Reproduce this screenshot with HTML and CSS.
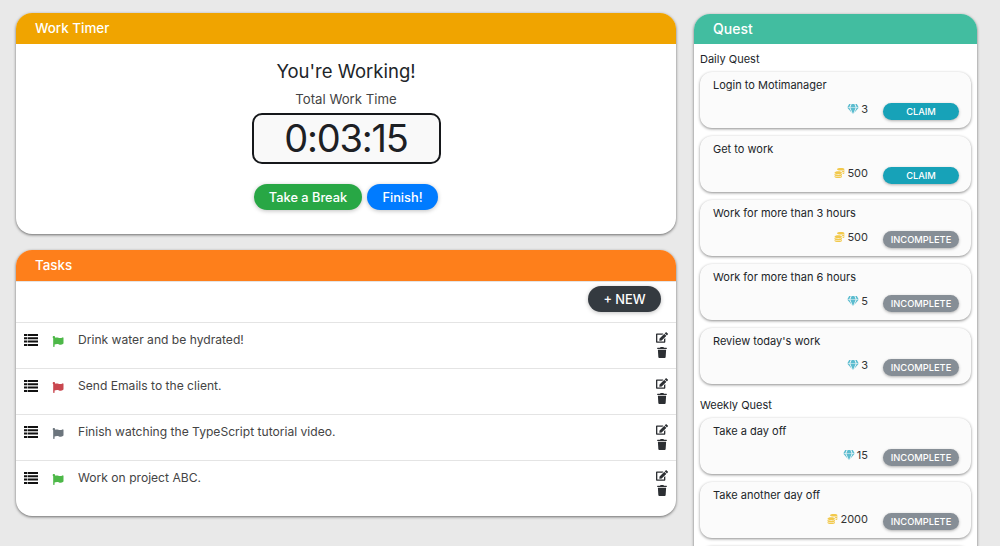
FILE: index.html
```html
<!DOCTYPE html>
<html lang="en">
<head>
  <meta charset="UTF-8">
  <title>Motimanager</title>
  <link rel="stylesheet" href="styles.css">
</head>
<body>
  <svg class="defs" width="0" height="0">
    <symbol id="i-list" viewBox="0 0 14 12"><path d="M0 0h3.400v2H0zM4 0h10v2H4zM0 3.300h3.400v2H0zM4 3.300h10v2H4zM0 6.600h3.400v2H0zM4 6.600h10v2H4zM0 9.900h3.400v2H0zM4 9.900h10v2H4z"/></symbol>
    <symbol id="i-flag" viewBox="0 0 512 512"><path d="M349.565 98.783C295.978 98.783 251.721 64 184.348 64c-24.955 0-47.309 4.384-68.045 12.013a55.947 55.947 0 0 0 3.586-23.562C118.117 24.015 94.806 1.206 66.338.048 34.345-1.254 8 24.296 8 56c0 19.026 9.497 35.825 24 45.945V488c0 13.255 10.745 24 24 24h16c13.255 0 24-10.745 24-24v-94.4c28.311-12.064 63.582-22.122 114.435-22.122 53.588 0 97.844 34.783 165.217 34.783 48.169 0 86.667-16.294 122.505-40.858C506.84 359.452 512 349.571 512 339.045v-243.1c0-23.393-24.269-38.87-45.485-29.016-34.338 15.948-76.454 31.854-116.95 31.854z"/></symbol>
    <symbol id="i-edit" viewBox="0 0 576 512"><path d="M402.6 83.2l90.2 90.2c3.8 3.8 3.8 10 0 13.8L274.4 405.6l-92.8 10.3c-12.4 1.4-22.9-9.1-21.5-21.5l10.3-92.8L388.8 83.2c3.8-3.8 10-3.8 13.8 0zm162-22.9l-48.8-48.8c-15.2-15.2-39.9-15.2-55.2 0l-35.4 35.4c-3.8 3.8-3.8 10 0 13.8l90.2 90.2c3.8 3.8 10 3.8 13.8 0l35.4-35.4c15.2-15.3 15.2-40 0-55.2zM384 346.2V448H64V128h229.8c3.2 0 6.2-1.3 8.5-3.5l40-40c7.6-7.6 2.2-20.5-8.5-20.5H48C21.5 64 0 85.5 0 112v352c0 26.5 21.5 48 48 48h352c26.5 0 48-21.5 48-48V306.2c0-10.7-12.9-16-20.5-8.5l-40 40c-2.2 2.3-3.5 5.3-3.5 8.5z"/></symbol>
    <symbol id="i-trash" viewBox="0 0 448 512"><path d="M432 32H312l-9.4-18.7A24 24 0 0 0 281.1 0H166.8a23.72 23.72 0 0 0-21.4 13.3L136 32H16A16 16 0 0 0 0 48v32a16 16 0 0 0 16 16h416a16 16 0 0 0 16-16V48a16 16 0 0 0-16-16zM53.2 467a48 48 0 0 0 47.9 45h245.8a48 48 0 0 0 47.9-45L416 128H32z"/></symbol>
    <symbol id="i-gem" viewBox="0 0 576 512"><path d="M485.5 0L576 160H474.9L405.7 0h79.8zm-128 0l69.2 160H149.3L218.5 0h139zm-267 0h79.8l-69.2 160H0L90.5 0zM0 192h100.7l123 251.7c1.5 3.1-2.7 5.9-5 3.3L0 192zm148.2 0h279.6l-137 318.2c-1 2.4-4.5 2.4-5.500 0L148.2 192zm204.1 251.7l123-251.7H576L357.3 446.9c-2.3 2.7-6.5-.1-5-3.2z"/></symbol>
    <symbol id="i-coins" viewBox="0 0 512 512"><path d="M0 405.3V448c0 35.3 86 64 192 64s192-28.7 192-64v-42.7C342.7 434.4 267.2 448 192 448S41.3 434.4 0 405.3zM320 128c106 0 192-28.7 192-64S426 0 320 0 128 28.7 128 64s86 64 192 64zM0 300.4V352c0 35.3 86 64 192 64s192-28.7 192-64v-51.6c-41.3 34-116.9 51.6-192 51.6S41.3 334.4 0 300.4zm416 11c57.3-11.1 96-31.7 96-55.4v-42.7c-23.2 16.4-57.3 27.6-96 34.5v63.6zM192 160C86 160 0 195.8 0 240s86 80 192 80 192-35.8 192-80-86-80-192-80zm219.3 56.3c60-10.8 100.7-32 100.7-56.3v-42.7c-35.5 25.1-96.5 38.6-160.7 41.8 29.5 14.3 51.2 33.5 60 57.2z"/></symbol>
  </svg>

  <div class="page">
    <div class="left">
      <section class="card timer-card">
        <h2 class="card-head head-amber">Work Timer</h2>
        <div class="timer">
          <h3 class="timer-title">You're Working!</h3>
          <p class="timer-label">Total Work Time</p>
          <div class="clock">0:03:15</div>
          <div class="timer-btns">
            <button class="btn btn-green">Take a Break</button>
            <button class="btn btn-blue">Finish!</button>
          </div>
        </div>
      </section>

      <section class="card tasks-card">
        <h2 class="card-head head-orange">Tasks</h2>
        <div class="tasks-bar">
          <button class="btn btn-dark">+ NEW</button>
        </div>
        <div class="task">
          <svg class="ico-list"><use href="#i-list"/></svg>
          <svg class="ico-flag flag-green"><use href="#i-flag"/></svg>
          <span class="task-text">Drink water and be hydrated!</span>
          <div class="task-actions">
            <svg class="ico-edit"><use href="#i-edit"/></svg>
            <svg class="ico-trash"><use href="#i-trash"/></svg>
          </div>
        </div>
        <div class="task">
          <svg class="ico-list"><use href="#i-list"/></svg>
          <svg class="ico-flag flag-red"><use href="#i-flag"/></svg>
          <span class="task-text">Send Emails to the client.</span>
          <div class="task-actions">
            <svg class="ico-edit"><use href="#i-edit"/></svg>
            <svg class="ico-trash"><use href="#i-trash"/></svg>
          </div>
        </div>
        <div class="task">
          <svg class="ico-list"><use href="#i-list"/></svg>
          <svg class="ico-flag flag-grey"><use href="#i-flag"/></svg>
          <span class="task-text">Finish watching the TypeScript tutorial video.</span>
          <div class="task-actions">
            <svg class="ico-edit"><use href="#i-edit"/></svg>
            <svg class="ico-trash"><use href="#i-trash"/></svg>
          </div>
        </div>
        <div class="task task-last">
          <svg class="ico-list"><use href="#i-list"/></svg>
          <svg class="ico-flag flag-green"><use href="#i-flag"/></svg>
          <span class="task-text">Work on project ABC.</span>
          <div class="task-actions">
            <svg class="ico-edit"><use href="#i-edit"/></svg>
            <svg class="ico-trash"><use href="#i-trash"/></svg>
          </div>
        </div>
      </section>
    </div>

    <section class="card quest-card">
      <h2 class="card-head head-teal">Quest</h2>
      <div class="quests">
        <h4 class="quest-group">Daily Quest</h4>
        <div class="quest">
          <div class="quest-name">Login to Motimanager</div>
          <div class="quest-foot">
            <span class="reward"><svg class="ico-gem"><use href="#i-gem"/></svg>3</span>
            <button class="pill pill-claim">CLAIM</button>
          </div>
        </div>
        <div class="quest">
          <div class="quest-name">Get to work</div>
          <div class="quest-foot">
            <span class="reward"><svg class="ico-coins"><use href="#i-coins"/></svg>500</span>
            <button class="pill pill-claim">CLAIM</button>
          </div>
        </div>
        <div class="quest">
          <div class="quest-name">Work for more than 3 hours</div>
          <div class="quest-foot">
            <span class="reward"><svg class="ico-coins"><use href="#i-coins"/></svg>500</span>
            <button class="pill pill-off">INCOMPLETE</button>
          </div>
        </div>
        <div class="quest">
          <div class="quest-name">Work for more than 6 hours</div>
          <div class="quest-foot">
            <span class="reward"><svg class="ico-gem"><use href="#i-gem"/></svg>5</span>
            <button class="pill pill-off">INCOMPLETE</button>
          </div>
        </div>
        <div class="quest">
          <div class="quest-name">Review today's work</div>
          <div class="quest-foot">
            <span class="reward"><svg class="ico-gem"><use href="#i-gem"/></svg>3</span>
            <button class="pill pill-off">INCOMPLETE</button>
          </div>
        </div>

        <h4 class="quest-group group-weekly">Weekly Quest</h4>
        <div class="quest">
          <div class="quest-name">Take a day off</div>
          <div class="quest-foot">
            <span class="reward"><svg class="ico-gem"><use href="#i-gem"/></svg>15</span>
            <button class="pill pill-off">INCOMPLETE</button>
          </div>
        </div>
        <div class="quest">
          <div class="quest-name">Take another day off</div>
          <div class="quest-foot">
            <span class="reward"><svg class="ico-coins"><use href="#i-coins"/></svg>2000</span>
            <button class="pill pill-off">INCOMPLETE</button>
          </div>
        </div>
        <div class="quest"></div>
      </div>
    </section>
  </div>
</body>
</html>
```

FILE: styles.css
```css
* {
  box-sizing: border-box;
}

html,
body {
  margin: 0;
  height: 100%;
  overflow: hidden;
}

body {
  background: #e9e9e9;
  color: #212529;
  font-family: Inter, "Open Sans", sans-serif;
}

.defs {
  position: absolute;
}

svg {
  fill: currentColor;
  display: block;
}

.page {
  display: flex;
  align-items: flex-start;
  gap: 18px;
  height: 546px;
  overflow: hidden;
  padding: 13px 23px 0 16px;
}

.left {
  width: 660px;
  display: flex;
  flex-direction: column;
  gap: 16px;
}

.card {
  background: #fff;
  border-radius: 16px;
  box-shadow: 0 1px 3px rgba(0, 0, 0, 0.55);
  overflow: hidden;
}

.card-head {
  margin: 0;
  height: 31px;
  padding: 0 19px;
  font-size: 13.4px;
  font-weight: 500;
  line-height: 30px;
  color: #fff;
}

.head-amber { background: #f0a400; }
.head-orange { background: #fe7f1b; }
.head-teal {
  background: #42bda0;
  height: 30px;
  line-height: 30px;
  font-size: 14px;
}

/* timer */
.timer-card {
  height: 221px;
}

.timer {
  display: flex;
  flex-direction: column;
  align-items: center;
}

.timer-title {
  margin: 16px 0 0;
  font-size: 18.5px;
  font-weight: 400;
  line-height: 22px;
}

.timer-label {
  margin: 8px 0 0;
  font-size: 13.2px;
  line-height: 18px;
  color: #444;
}

.clock {
  width: 189px;
  height: 51px;
  margin-top: 5px;
  border: 2px solid #16181b;
  border-radius: 10px;
  background: #f9f9f9;
  font-size: 38px;
  line-height: 47px;
  letter-spacing: -1.2px;
  text-align: center;
  color: #1d2024;
}

.timer-btns {
  display: flex;
  gap: 5px;
  margin-top: 20px;
}

.btn {
  border: none;
  border-radius: 14px;
  height: 26px;
  padding: 0;
  font-family: inherit;
  font-size: 12.8px;
  font-weight: 500;
  white-space: nowrap;
  color: #fff;
  box-shadow: 0 1px 4px rgba(0, 0, 0, 0.25);
}

.btn-green { background: #28a745; width: 108px; }
.btn-blue { background: #007bff; width: 71px; }
.btn-dark { background: #343a40; width: 73px; }

/* tasks */
.tasks-card {
  height: 266px;
}

.tasks-bar {
  display: flex;
  justify-content: flex-end;
  height: 42px;
  padding: 4px 15px 0 0;
  border-top: 1px solid #e4e4e4;
  border-bottom: 1px solid #e4e4e4;
}

.task {
  display: flex;
  align-items: flex-start;
  height: 46px;
  padding: 9px 9px 0 8px;
  border-bottom: 1px solid #e4e4e4;
}

.task-last {
  border-bottom: none;
}

.ico-list {
  width: 14px;
  height: 12px;
  margin-top: 2px;
  color: #111;
}

.ico-flag {
  width: 12px;
  height: 11px;
  margin: 4px 0 0 14px;
}

.flag-green { color: #4db848; }
.flag-red { color: #c9474f; }
.flag-grey { color: #6c757d; }

.task-text {
  flex: 1;
  margin-left: 14px;
  font-size: 12.1px;
  line-height: 16px;
  color: #444;
}

.task-actions {
  display: flex;
  flex-direction: column;
  align-items: center;
  gap: 4px;
  margin: 0 -1px 0 0;
  color: #2c2f33;
}

.ico-edit {
  width: 12px;
  height: 11px;
}

.ico-trash {
  width: 10px;
  height: 11px;
}

/* quests */
.quest-card {
  width: 283px;
  margin-top: 1px;
  height: 560px;
  border-radius: 16px 16px 0 0;
}

.quests {
  padding: 8px 6px 0;
}

.quest-group {
  margin: 0 0 5px;
  font-size: 11px;
  font-weight: 400;
  line-height: 15px;
  color: #212529;
}

.group-weekly {
  margin-top: 14px;
  margin-bottom: 5px;
}

.quest {
  height: 56px;
  margin-bottom: 8px;
  padding: 6px 12px 0 13px;
  border-radius: 12px;
  background: #fbfbfb;
  box-shadow: 0 1px 3px rgba(0, 0, 0, 0.45);
}

.quest-name {
  font-size: 11px;
  line-height: 15px;
  color: #212529;
}

.quest-foot {
  display: flex;
  justify-content: flex-end;
  align-items: center;
  margin-top: 10px;
}

.reward {
  display: flex;
  align-items: center;
  gap: 2px;
  margin: -5px 15px 0 0;
  font-size: 11px;
  line-height: 14px;
  color: #333;
}

.ico-gem {
  width: 12px;
  height: 10px;
  color: #5bbccf;
}

.ico-coins {
  width: 11px;
  height: 10px;
  color: #f2c94c;
}

.pill {
  width: 76px;
  height: 17px;
  padding: 0;
  border: none;
  border-radius: 9px;
  font-family: inherit;
  font-size: 9.3px;
  font-weight: 500;
  color: #fff;
  box-shadow: 0 1px 3px rgba(0, 0, 0, 0.3);
}

.pill-claim { background: #17a2b8; }
.pill-off { background: #868e96; }
```
